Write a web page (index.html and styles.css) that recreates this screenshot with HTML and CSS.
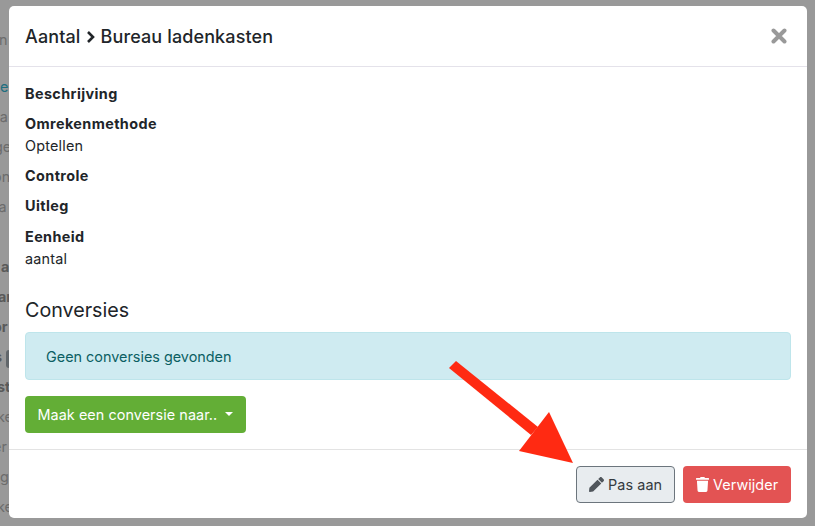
FILE: index.html
```html
<!DOCTYPE html>
<html lang="nl">
<head>
<meta charset="utf-8">
<title>Bureau ladenkasten</title>
<link rel="stylesheet" href="styles.css">
</head>
<body>
<div class="behind">
  <span class="frag f1">n</span>
  <span class="frag f2 link">e</span>
  <span class="frag f3">ta</span>
  <span class="frag f4">ge</span>
  <span class="frag f5">on</span>
  <span class="frag f6">la</span>
  <span class="frag f7 strong">a</span>
  <span class="frag f8 strong">ar</span>
  <span class="frag f9 strong">or</span>
  <span class="frag f9b strong">s</span>
  <span class="chip"></span>
  <span class="frag f10 strong">st</span>
  <span class="frag f11">ke</span>
  <span class="frag f12">er</span>
  <span class="frag f13">g</span>
  <span class="frag f14">ke</span>
</div>
<main class="modal">
  <header class="modal-header">
    <h1 class="modal-title">Aantal <svg class="chev" viewBox="0 0 10 14" aria-hidden="true"><path d="M2 2l5 5-5 5" fill="none" stroke="currentColor" stroke-width="2.6"/></svg> Bureau ladenkasten</h1>
    <svg class="close" viewBox="0 0 16 16" aria-hidden="true"><path d="M2.5 2.5l11 11M13.5 2.5l-11 11" stroke="currentColor" stroke-width="4" stroke-linecap="round"/></svg>
  </header>
  <section class="modal-body">
    <dl class="fields">
      <dt>Beschrijving</dt>
      <dt>Omrekenmethode</dt>
      <dd>Optellen</dd>
      <dt>Controle</dt>
      <dt>Uitleg</dt>
      <dt>Eenheid</dt>
      <dd>aantal</dd>
    </dl>
    <h2 class="section-title">Conversies</h2>
    <div class="alert">Geen conversies gevonden</div>
    <button class="btn btn-green">Maak een conversie naar.. <span class="caret"></span></button>
  </section>
  <footer class="modal-footer">
    <button class="btn btn-light"><svg class="icon" viewBox="0 0 512 512" aria-hidden="true"><path fill="currentColor" d="M290.7 93.2l128 128L141 498.9l-114.100 12.600C11.600 513.200-1.300 500.300.4 485l12.700-114.200L290.700 93.200zm207.200-19.100l-60.100-60.100c-18.700-18.700-49.100-18.700-67.900 0l-56.500 56.500 128 128 56.500-56.500c18.800-18.800 18.800-49.200 0-67.900z"/></svg> Pas aan</button>
    <button class="btn btn-red"><svg class="icon trash" viewBox="0 0 448 512" aria-hidden="true"><path fill="currentColor" d="M432 32H312l-9.400-18.700A24 24 0 0 0 281.100 0H166.800a23.700 23.700 0 0 0-21.400 13.300L136 32H16A16 16 0 0 0 0 48v32a16 16 0 0 0 16 16h416a16 16 0 0 0 16-16V48a16 16 0 0 0-16-16zM53.200 467a48 48 0 0 0 47.900 45h245.800a48 48 0 0 0 47.900-45L416 128H32z"/></svg> Verwijder</button>
  </footer>
</main>
<svg class="arrow" viewBox="0 0 815 526" aria-hidden="true"><path fill="#ff2a12" d="M456 361L538 427 531 435 449 368Z"/><path fill="#ff2a12" d="M549 412L573 463 519 451Z"/></svg>
</body>
</html>
```
FILE: styles.css
```css
* { box-sizing: border-box; }
html, body { margin: 0; height: 100%; }
body {
  width: 815px;
  height: 526px;
  overflow: hidden;
  position: relative;
  background: #999;
  font-family: Inter, "Liberation Sans", sans-serif;
  font-size: 14.4px;
  color: #212529;
  padding: 6px 8px 8px 9px;
}
.behind { position: absolute; inset: 0; width: 9px; overflow: hidden; color: #6c6c6c; }
.frag { position: absolute; left: 0; line-height: 16px; white-space: nowrap; }
.f1 { top: 32px; left: -1px; }
.f2 { top: 79px; left: 0; }
.f3 { top: 109px; left: -5px; }
.f4 { top: 139px; left: -6px; }
.f5 { top: 169px; left: -7px; }
.f6 { top: 199px; left: -5px; }
.f7 { top: 259px; left: 1px; }
.f8 { top: 289px; left: -2px; }
.f9 { top: 319px; left: -7px; }
.f9b { top: 349px; left: -6px; }
.f10 { top: 379px; left: -3px; }
.f11 { top: 409px; left: -3px; }
.f12 { top: 439px; left: -7px; }
.f13 { top: 469px; left: 0; }
.f14 { top: 499px; left: -3px; }
.strong { font-weight: 700; color: #5a5a5a; }
.link { color: #1f6f80; }
.chip { position: absolute; left: 6px; top: 350px; width: 12px; height: 18px; border-radius: 3px; background: #62676b; }
.modal {
  position: relative;
  width: 798px;
  height: 512px;
  display: flex;
  flex-direction: column;
  background: #fff;
  border-radius: 5px;
}
.modal-header {
  height: 61px;
  flex: none;
  display: flex;
  align-items: center;
  justify-content: space-between;
  padding: 0 20px 0 16px;
  border-bottom: 1px solid #e4e2ea;
}
.modal-title { margin: 2px 0 0; font-size: 18px; font-weight: 500; letter-spacing: .12px; line-height: 1.2; display: flex; align-items: center; }
.chev { width: 10px; height: 14px; margin: 0 5px 0 5px; }
.close { width: 16px; height: 16px; color: #999; }
.modal-body { flex: 1; padding: 16px 16px 0; min-height: 0; }
.fields { margin: 0; letter-spacing: .2px; }
.fields dt { font-weight: 700; line-height: 21.6px; margin-bottom: 8.5px; letter-spacing: .4px; }
.fields dt:has(+ dd) { margin-bottom: 0; }
.fields dd { margin: 0 0 8.5px; line-height: 21.6px; }
.fields dt:last-of-type { margin-top: 9.5px; }
.section-title { margin: 29px 0 0; font-size: 19.7px; font-weight: 400; line-height: 24px; }
.alert {
  margin-top: 10px;
  height: 48px;
  padding: 0 20px;
  display: flex;
  align-items: center;
  background: #cfebf1;
  border: 1px solid #bee5eb;
  border-radius: 4px;
  color: #0c5f63;
}
.btn {
  font: inherit;
  font-weight: 400;
  letter-spacing: .06px;
  height: 37px;
  border-radius: 4px;
  border: 1px solid transparent;
  display: inline-flex;
  align-items: center;
  white-space: pre;
  padding-bottom: 2px;
  cursor: pointer;
}
.btn-green { margin-top: 16px; width: 221px; padding-left: 11.5px; padding-right: 11.5px; background: #63ae36; color: #fff; }
.caret { width: 0; height: 0; margin-left: 4px; border-left: 4px solid transparent; border-right: 4px solid transparent; border-top: 4px solid #fff; }
.modal-footer {
  flex: none;
  height: 69px;
  border-top: 1px solid #e3e3e3;
  display: flex;
  justify-content: flex-end;
  align-items: flex-start;
  gap: 8px;
  padding: 16px 16px 0;
}
.btn-light { width: 99px; padding-left: 12px; padding-right: 12px; background: #e8ecef; border-color: #6c757d; color: #343a40; }
.btn-red { width: 108px; padding-left: 12px; padding-right: 12px; background: #e35353; color: #fff; }
.icon { width: 15px; height: 15px; flex: none; }
.btn-light .icon { color: #50565c; }
.trash { width: 13px; }
.arrow { position: absolute; inset: 0; width: 815px; height: 526px; pointer-events: none; }
```
